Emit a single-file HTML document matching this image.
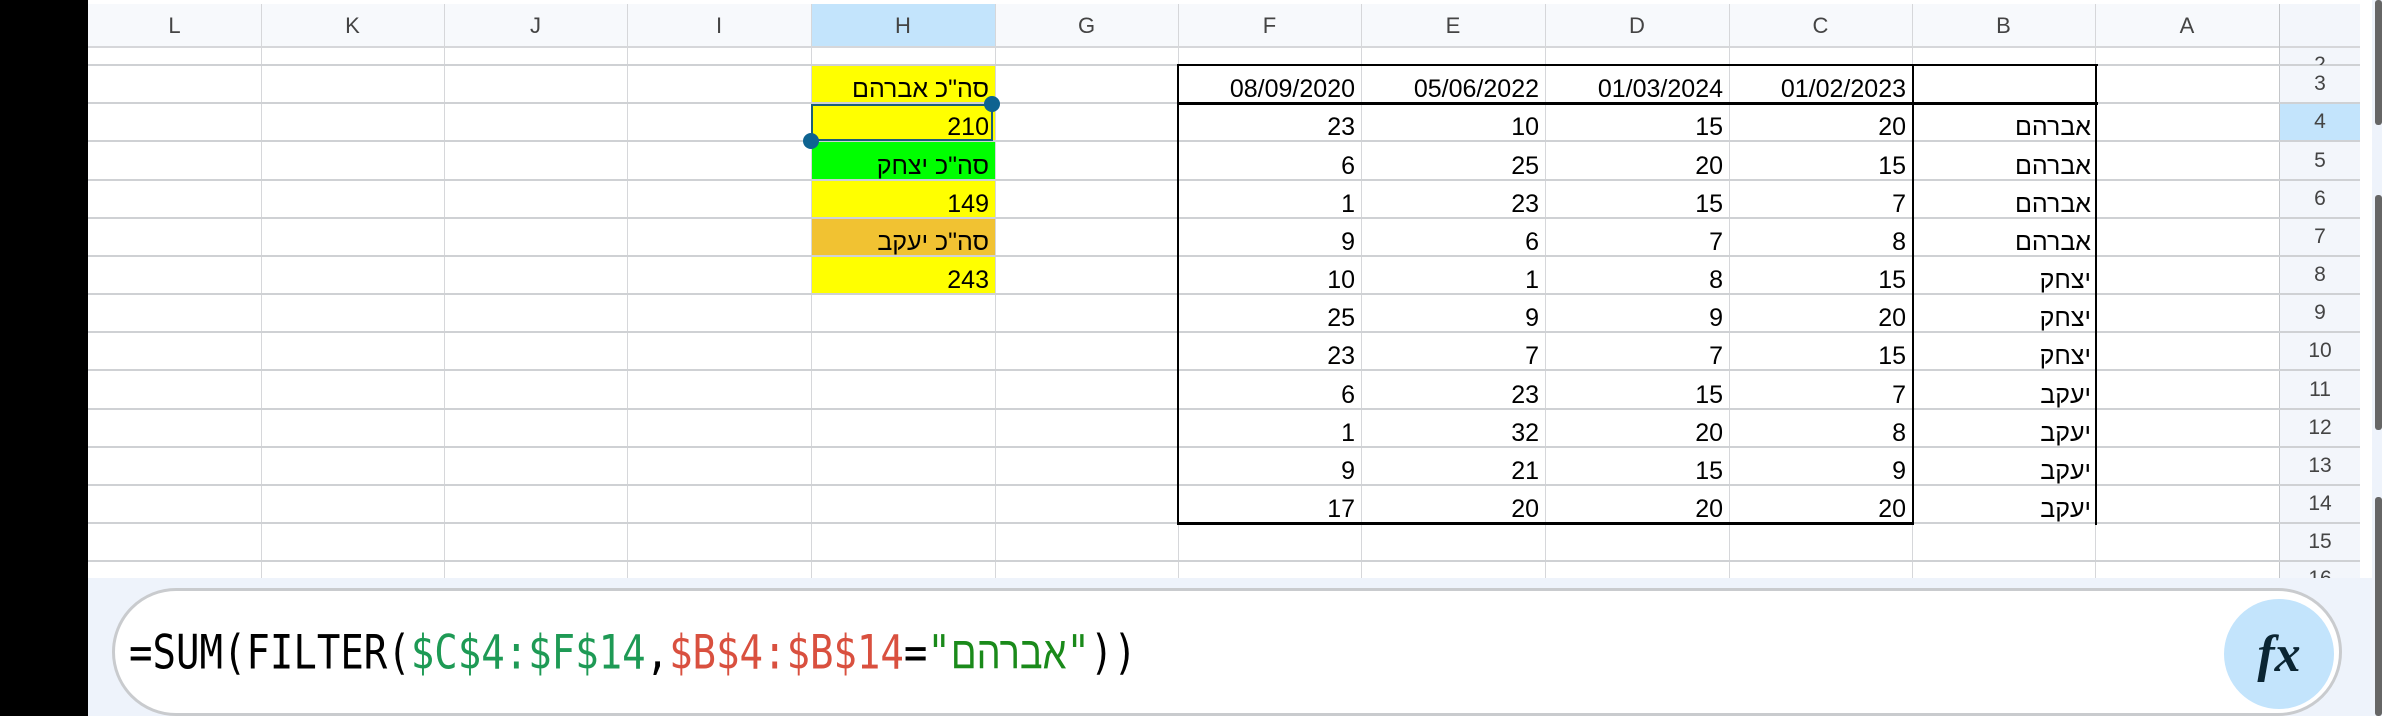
<!DOCTYPE html>
<html><head><meta charset="utf-8"><style>
*{margin:0;padding:0;box-sizing:border-box}
body{width:2382px;height:716px;overflow:hidden;background:#eef3fb;position:relative;font-family:"Liberation Sans",sans-serif}
.a{position:absolute}
.c{position:absolute;display:flex;align-items:flex-end;justify-content:flex-end;padding:0 6px 1px 0;font-size:25px;color:#000;line-height:26px;white-space:nowrap}
.h{position:absolute;display:flex;align-items:center;justify-content:center;font-size:22px;color:#444;top:4px;height:43px}
.r{position:absolute;left:2280px;width:80px;display:flex;align-items:center;justify-content:center;font-size:21px;color:#444}
.hl{position:absolute;left:88px;width:2272px;height:2px;background:#cfd1d4}
.vl{position:absolute;top:47px;height:531px;width:1px;background:#d6d7da}
</style></head><body>
<div class="a" style="left:0;top:0;width:88px;height:716px;background:#000"></div>
<div class="a" style="left:88px;top:0;width:2284px;height:578px;background:#fff"></div>
<div class="a" style="left:88px;top:4px;width:2192px;height:43px;background:#f7f9fc"></div>
<div class="a" style="left:2280px;top:4px;width:80px;height:574px;background:#f3f6fb"></div>
<div class="a" style="left:811px;top:4px;width:184px;height:43px;background:#c3e4fc"></div>
<div class="a" style="left:2280px;top:103px;width:80px;height:38px;background:#c3e4fc"></div>
<div class="a" style="left:88px;top:46px;width:2272px;height:2px;background:#d6d7da"></div>
<div class="a" style="left:2279px;top:4px;width:1px;height:574px;background:#c4c6c9"></div>
<div class="a" style="left:2375px;top:0;width:7px;height:125px;background:#666;border-radius:3px"></div>
<div class="a" style="left:2375px;top:195px;width:7px;height:235px;background:#666;border-radius:3px"></div>
<div class="a" style="left:2375px;top:497px;width:7px;height:219px;background:#666;border-radius:3px"></div>
<div class="h" style="left:88px;width:173px">L</div>
<div class="h" style="left:261px;width:183px">K</div>
<div class="h" style="left:444px;width:183px">J</div>
<div class="h" style="left:627px;width:184px">I</div>
<div class="h" style="left:811px;width:184px">H</div>
<div class="h" style="left:995px;width:183px">G</div>
<div class="h" style="left:1178px;width:183px">F</div>
<div class="h" style="left:1361px;width:184px">E</div>
<div class="h" style="left:1545px;width:184px">D</div>
<div class="h" style="left:1729px;width:183px">C</div>
<div class="h" style="left:1912px;width:183px">B</div>
<div class="h" style="left:2095px;width:184px">A</div>
<div class="a" style="left:811px;top:65px;width:184px;height:38px;background:#ffff00"></div>
<div class="a" style="left:811px;top:103px;width:184px;height:38px;background:#ffff00"></div>
<div class="a" style="left:811px;top:141px;width:184px;height:39px;background:#00ff00"></div>
<div class="a" style="left:811px;top:180px;width:184px;height:38px;background:#ffff00"></div>
<div class="a" style="left:811px;top:218px;width:184px;height:38px;background:#f1c232"></div>
<div class="a" style="left:811px;top:256px;width:184px;height:38px;background:#ffff00"></div>
<div class="vl" style="left:261px"></div><div class="vl" style="left:444px"></div><div class="vl" style="left:627px"></div><div class="vl" style="left:811px"></div><div class="vl" style="left:995px"></div><div class="vl" style="left:1178px"></div><div class="vl" style="left:1361px"></div><div class="vl" style="left:1545px"></div><div class="vl" style="left:1729px"></div><div class="vl" style="left:1912px"></div><div class="vl" style="left:2095px"></div>
<div class="a" style="left:261px;top:4px;width:1px;height:43px;background:#d6d7da"></div><div class="a" style="left:444px;top:4px;width:1px;height:43px;background:#d6d7da"></div><div class="a" style="left:627px;top:4px;width:1px;height:43px;background:#d6d7da"></div><div class="a" style="left:811px;top:4px;width:1px;height:43px;background:#d6d7da"></div><div class="a" style="left:995px;top:4px;width:1px;height:43px;background:#d6d7da"></div><div class="a" style="left:1178px;top:4px;width:1px;height:43px;background:#d6d7da"></div><div class="a" style="left:1361px;top:4px;width:1px;height:43px;background:#d6d7da"></div><div class="a" style="left:1545px;top:4px;width:1px;height:43px;background:#d6d7da"></div><div class="a" style="left:1729px;top:4px;width:1px;height:43px;background:#d6d7da"></div><div class="a" style="left:1912px;top:4px;width:1px;height:43px;background:#d6d7da"></div><div class="a" style="left:2095px;top:4px;width:1px;height:43px;background:#d6d7da"></div>
<div class="hl" style="top:64px"></div><div class="hl" style="top:102px"></div><div class="hl" style="top:140px"></div><div class="hl" style="top:179px"></div><div class="hl" style="top:217px"></div><div class="hl" style="top:255px"></div><div class="hl" style="top:293px"></div><div class="hl" style="top:331px"></div><div class="hl" style="top:369px"></div><div class="hl" style="top:408px"></div><div class="hl" style="top:446px"></div><div class="hl" style="top:484px"></div><div class="hl" style="top:522px"></div><div class="hl" style="top:560px"></div>
<div class="a" style="left:1177px;top:64px;width:921px;height:2px;background:#000"></div>
<div class="a" style="left:1177px;top:102px;width:921px;height:3px;background:#000"></div>
<div class="a" style="left:1177px;top:522px;width:736px;height:3px;background:#000"></div>
<div class="a" style="left:1177px;top:64px;width:2px;height:461px;background:#000"></div>
<div class="a" style="left:1912px;top:64px;width:2px;height:461px;background:#000"></div>
<div class="a" style="left:2095px;top:64px;width:2px;height:461px;background:#000"></div>
<div class="r" style="top:47px;height:18px;overflow:hidden;align-items:flex-end"><span style="margin-bottom:-12px">2</span></div>
<div class="r" style="top:65px;height:38px">3</div><div class="r" style="top:103px;height:38px">4</div><div class="r" style="top:141px;height:39px">5</div><div class="r" style="top:180px;height:38px">6</div><div class="r" style="top:218px;height:38px">7</div><div class="r" style="top:256px;height:38px">8</div><div class="r" style="top:294px;height:38px">9</div><div class="r" style="top:332px;height:38px">10</div><div class="r" style="top:370px;height:39px">11</div><div class="r" style="top:409px;height:38px">12</div><div class="r" style="top:447px;height:38px">13</div><div class="r" style="top:485px;height:38px">14</div><div class="r" style="top:523px;height:38px">15</div>
<div class="r" style="top:561px;height:17px;overflow:hidden;align-items:flex-start"><span style="margin-top:6px">16</span></div>
<div class="c" dir="rtl" style="left:811px;top:65px;width:184px;height:38px;justify-content:flex-start">סה"כ אברהם</div>
<div class="c" style="left:811px;top:103px;width:184px;height:38px">210</div>
<div class="c" dir="rtl" style="left:811px;top:141px;width:184px;height:39px;justify-content:flex-start">סה"כ יצחק</div>
<div class="c" style="left:811px;top:180px;width:184px;height:38px">149</div>
<div class="c" dir="rtl" style="left:811px;top:218px;width:184px;height:38px;justify-content:flex-start">סה"כ יעקב</div>
<div class="c" style="left:811px;top:256px;width:184px;height:38px">243</div>
<div class="a" style="left:811px;top:104px;width:182px;height:37px;border:2.5px solid #1b5f78"></div>
<div class="a" style="left:984px;top:96px;width:16px;height:16px;border-radius:50%;background:#0e6390"></div>
<div class="a" style="left:803px;top:133px;width:16px;height:16px;border-radius:50%;background:#0e6390"></div>
<div class="c" style="left:1178px;top:65px;width:183px;height:38px">08/09/2020</div>
<div class="c" style="left:1361px;top:65px;width:184px;height:38px">05/06/2022</div>
<div class="c" style="left:1545px;top:65px;width:184px;height:38px">01/03/2024</div>
<div class="c" style="left:1729px;top:65px;width:183px;height:38px">01/02/2023</div>
<div class="c" style="left:1178px;top:103px;width:183px;height:38px">23</div><div class="c" style="left:1361px;top:103px;width:184px;height:38px">10</div><div class="c" style="left:1545px;top:103px;width:184px;height:38px">15</div><div class="c" style="left:1729px;top:103px;width:183px;height:38px">20</div><div class="c" dir="rtl" style="left:1912px;top:103px;width:183px;height:38px;justify-content:flex-start;padding-right:4px">אברהם</div>
<div class="c" style="left:1178px;top:141px;width:183px;height:39px">6</div><div class="c" style="left:1361px;top:141px;width:184px;height:39px">25</div><div class="c" style="left:1545px;top:141px;width:184px;height:39px">20</div><div class="c" style="left:1729px;top:141px;width:183px;height:39px">15</div><div class="c" dir="rtl" style="left:1912px;top:141px;width:183px;height:39px;justify-content:flex-start;padding-right:4px">אברהם</div>
<div class="c" style="left:1178px;top:180px;width:183px;height:38px">1</div><div class="c" style="left:1361px;top:180px;width:184px;height:38px">23</div><div class="c" style="left:1545px;top:180px;width:184px;height:38px">15</div><div class="c" style="left:1729px;top:180px;width:183px;height:38px">7</div><div class="c" dir="rtl" style="left:1912px;top:180px;width:183px;height:38px;justify-content:flex-start;padding-right:4px">אברהם</div>
<div class="c" style="left:1178px;top:218px;width:183px;height:38px">9</div><div class="c" style="left:1361px;top:218px;width:184px;height:38px">6</div><div class="c" style="left:1545px;top:218px;width:184px;height:38px">7</div><div class="c" style="left:1729px;top:218px;width:183px;height:38px">8</div><div class="c" dir="rtl" style="left:1912px;top:218px;width:183px;height:38px;justify-content:flex-start;padding-right:4px">אברהם</div>
<div class="c" style="left:1178px;top:256px;width:183px;height:38px">10</div><div class="c" style="left:1361px;top:256px;width:184px;height:38px">1</div><div class="c" style="left:1545px;top:256px;width:184px;height:38px">8</div><div class="c" style="left:1729px;top:256px;width:183px;height:38px">15</div><div class="c" dir="rtl" style="left:1912px;top:256px;width:183px;height:38px;justify-content:flex-start;padding-right:4px">יצחק</div>
<div class="c" style="left:1178px;top:294px;width:183px;height:38px">25</div><div class="c" style="left:1361px;top:294px;width:184px;height:38px">9</div><div class="c" style="left:1545px;top:294px;width:184px;height:38px">9</div><div class="c" style="left:1729px;top:294px;width:183px;height:38px">20</div><div class="c" dir="rtl" style="left:1912px;top:294px;width:183px;height:38px;justify-content:flex-start;padding-right:4px">יצחק</div>
<div class="c" style="left:1178px;top:332px;width:183px;height:38px">23</div><div class="c" style="left:1361px;top:332px;width:184px;height:38px">7</div><div class="c" style="left:1545px;top:332px;width:184px;height:38px">7</div><div class="c" style="left:1729px;top:332px;width:183px;height:38px">15</div><div class="c" dir="rtl" style="left:1912px;top:332px;width:183px;height:38px;justify-content:flex-start;padding-right:4px">יצחק</div>
<div class="c" style="left:1178px;top:370px;width:183px;height:39px">6</div><div class="c" style="left:1361px;top:370px;width:184px;height:39px">23</div><div class="c" style="left:1545px;top:370px;width:184px;height:39px">15</div><div class="c" style="left:1729px;top:370px;width:183px;height:39px">7</div><div class="c" dir="rtl" style="left:1912px;top:370px;width:183px;height:39px;justify-content:flex-start;padding-right:4px">יעקב</div>
<div class="c" style="left:1178px;top:409px;width:183px;height:38px">1</div><div class="c" style="left:1361px;top:409px;width:184px;height:38px">32</div><div class="c" style="left:1545px;top:409px;width:184px;height:38px">20</div><div class="c" style="left:1729px;top:409px;width:183px;height:38px">8</div><div class="c" dir="rtl" style="left:1912px;top:409px;width:183px;height:38px;justify-content:flex-start;padding-right:4px">יעקב</div>
<div class="c" style="left:1178px;top:447px;width:183px;height:38px">9</div><div class="c" style="left:1361px;top:447px;width:184px;height:38px">21</div><div class="c" style="left:1545px;top:447px;width:184px;height:38px">15</div><div class="c" style="left:1729px;top:447px;width:183px;height:38px">9</div><div class="c" dir="rtl" style="left:1912px;top:447px;width:183px;height:38px;justify-content:flex-start;padding-right:4px">יעקב</div>
<div class="c" style="left:1178px;top:485px;width:183px;height:38px">17</div><div class="c" style="left:1361px;top:485px;width:184px;height:38px">20</div><div class="c" style="left:1545px;top:485px;width:184px;height:38px">20</div><div class="c" style="left:1729px;top:485px;width:183px;height:38px">20</div><div class="c" dir="rtl" style="left:1912px;top:485px;width:183px;height:38px;justify-content:flex-start;padding-right:4px">יעקב</div>
<div class="a" style="left:88px;top:578px;width:2284px;height:138px;background:#eef3fb"></div>
<div class="a" style="left:112px;top:588px;width:2230px;height:128px;background:#fff;border:3px solid #c9cbce;border-radius:64px"></div>
<div class="a" style="left:129px;top:626px;font-family:'DejaVu Sans Mono','Liberation Mono',monospace;font-size:39px;line-height:56px;white-space:nowrap;transform:scaleY(1.2);transform-origin:left center;color:#000">=SUM(FILTER(<span style="color:#1e9a55">$C$4:$F$14</span>,<span style="color:#d9503f">$B$4:$B$14</span>=<span style="color:#1a8a1a">"<span dir="rtl" style="font-family:'Liberation Sans','DejaVu Sans',sans-serif;font-size:38px">אברהם</span>"</span>))</div>
<div class="a" style="left:2224px;top:599px;width:110px;height:110px;border-radius:50%;background:#c3e4fc;display:flex;align-items:center;justify-content:center;font-family:'Liberation Serif',serif;font-style:italic;font-weight:bold;font-size:52px;color:#0b2533">fx</div>
</body></html>
